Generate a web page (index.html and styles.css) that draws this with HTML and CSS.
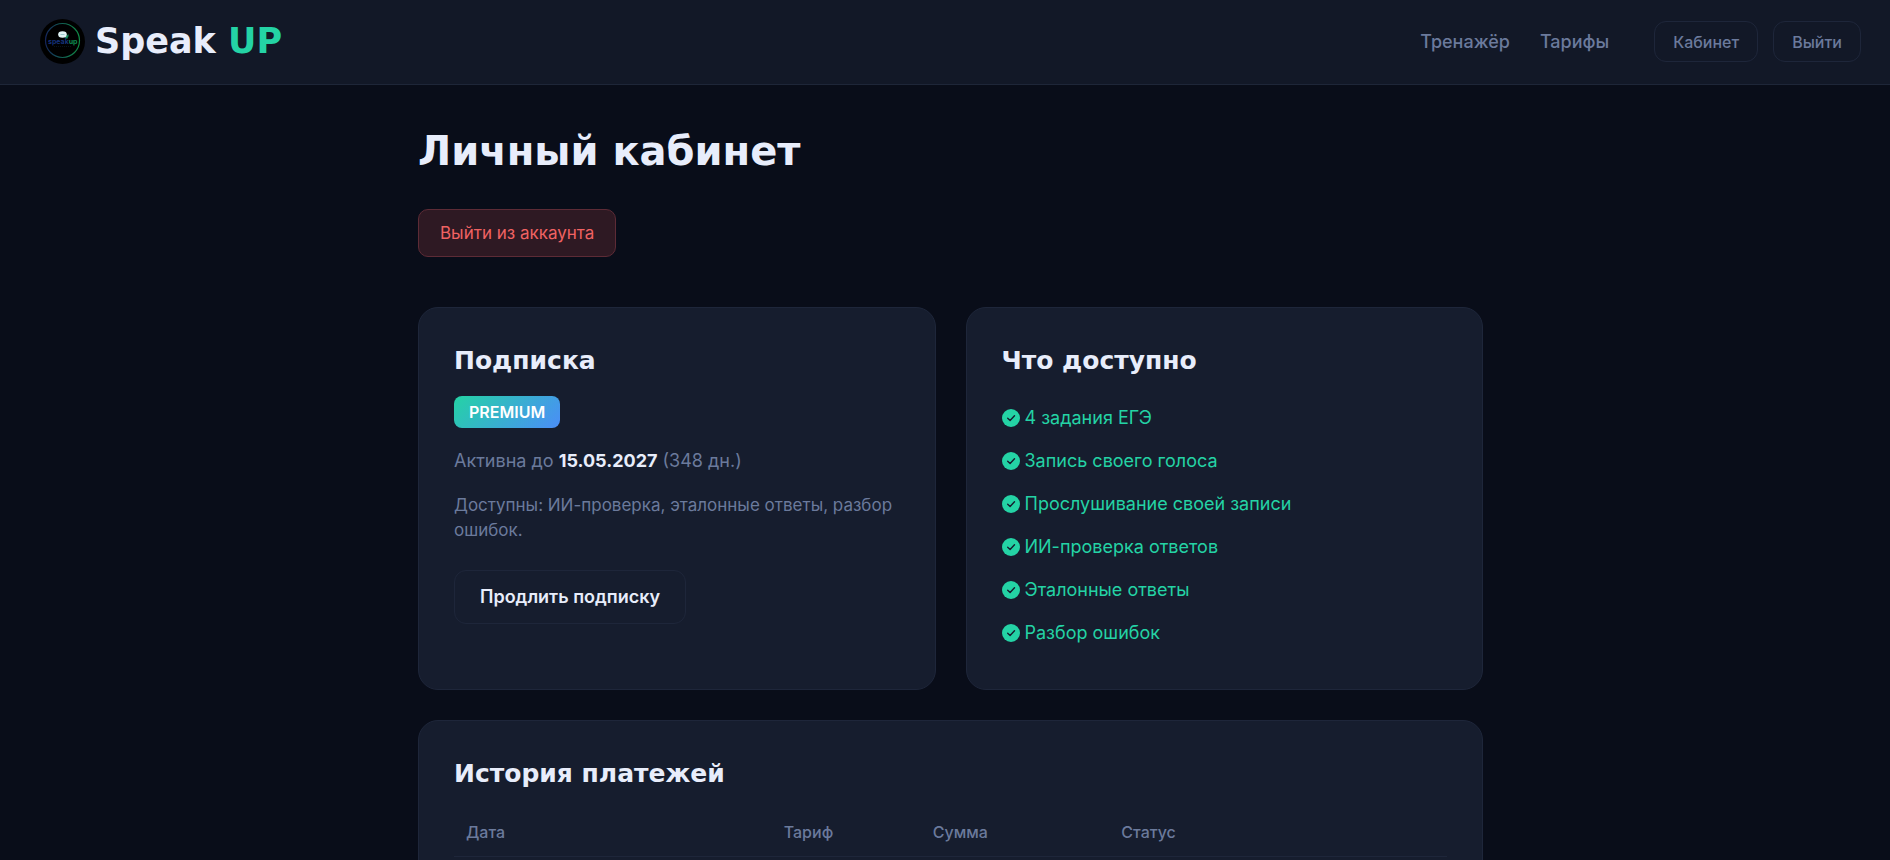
FILE: index.html
```
<!DOCTYPE html>
<html lang="ru">
<head>
    <meta charset="UTF-8">
    <meta name="viewport" content="width=device-width, initial-scale=1.0">
    <title>Speak UP — Личный кабинет</title>
    <link rel="stylesheet" href="styles.css">
</head>
<body>

    <!-- Check icon shared by the feature list -->
    <svg class="sprite" aria-hidden="true">
        <symbol id="check" viewBox="0 0 18 18">
            <circle cx="9" cy="9" r="9" fill="#24d3a5"/>
            <path d="M5.7 9.2l2.4 2.3 4.4-4.8" fill="none" stroke="#161d2e" stroke-width="1.4" stroke-linecap="round" stroke-linejoin="round"/>
        </symbol>
    </svg>

    <header class="header">
        <a class="brand" href="#">
            <svg class="brand-logo" viewBox="0 0 45 45" aria-hidden="true">
                <defs>
                    <linearGradient id="ring" x1="0" y1="0" x2="1" y2="0">
                        <stop offset="0" stop-color="#15265c"/>
                        <stop offset="0.5" stop-color="#126052"/>
                        <stop offset="1" stop-color="#108a45"/>
                    </linearGradient>
                </defs>
                <circle cx="22.5" cy="22.5" r="22.5" fill="#000"/>
                <circle cx="22.5" cy="21.5" r="17" fill="none" stroke="url(#ring)" stroke-width="1.2"/>
                <path d="M26 17c1.5-.5 2-1.5 2-2.5 1 2 .6 3.5-.4 4.2l-.4 1.3-2.4-1.600z" fill="#108a5a"/>
                <ellipse cx="22.5" cy="15.5" rx="4.3" ry="3.3" fill="#dff3f5"/>
                <path d="M20.5 15.5h4" stroke="#7fb8bd" stroke-width="0.7"/>
                <text x="8" y="25" class="logo-speak">speak<tspan class="logo-up">up</tspan></text>
                <path d="M14 27.5h17" stroke="#0c2230" stroke-width="0.6" stroke-dasharray="1 1"/>
            </svg>
            <span class="brand-name">Speak <span class="accent">UP</span></span>
        </a>
        <nav class="nav">
            <a class="nav-link" href="#">Тренажёр</a>
            <a class="nav-link" href="#">Тарифы</a>
            <div class="nav-buttons">
                <a class="btn btn-small" href="#">Кабинет</a>
                <button class="btn btn-small" type="button">Выйти</button>
            </div>
        </nav>
    </header>

    <main class="account">
        <h1>Личный кабинет</h1>
        <button class="btn-logout" type="button">Выйти из аккаунта</button>

        <div class="cards">
            <!-- Subscription -->
            <section class="card">
                <h2>Подписка</h2>
                <span class="badge">PREMIUM</span>
                <p class="status">Активна до <strong>15.05.2027</strong> (348 дн.)</p>
                <p class="note">Доступны: ИИ-проверка, эталонные ответы, разбор ошибок.</p>
                <a class="btn btn-large" href="#">Продлить подписку</a>
            </section>

            <!-- Features -->
            <section class="card">
                <h2>Что доступно</h2>
                <ul class="features">
                    <li><svg class="icon" aria-hidden="true"><use href="#check"/></svg>4 задания ЕГЭ</li>
                    <li><svg class="icon" aria-hidden="true"><use href="#check"/></svg>Запись своего голоса</li>
                    <li><svg class="icon" aria-hidden="true"><use href="#check"/></svg>Прослушивание своей записи</li>
                    <li><svg class="icon" aria-hidden="true"><use href="#check"/></svg>ИИ-проверка ответов</li>
                    <li><svg class="icon" aria-hidden="true"><use href="#check"/></svg>Эталонные ответы</li>
                    <li><svg class="icon" aria-hidden="true"><use href="#check"/></svg>Разбор ошибок</li>
                </ul>
            </section>

            <!-- Payments -->
            <section class="card card-wide">
                <h2>История платежей</h2>
                <table class="payments">
                    <thead>
                        <tr>
                            <th class="col-date" scope="col">Дата</th>
                            <th class="col-plan" scope="col">Тариф</th>
                            <th class="col-sum" scope="col">Сумма</th>
                            <th class="col-status" scope="col">Статус</th>
                        </tr>
                    </thead>
                    <tbody></tbody>
                </table>
            </section>
        </div>
    </main>

</body>
</html>
```
FILE: styles.css
```
:root {
    --bg: #090d19;
    --panel: #121827;
    --card: #161d2e;
    --border: #1e263a;
    --text: #e8edfb;
    --muted: #6b7a9c;
    --green: #24d3a5;
    --blue: #4b8df8;
    --red: #f06262;
}

* {
    margin: 0;
    padding: 0;
    box-sizing: border-box;
}

html {
    scrollbar-width: none;
}

body {
    background: var(--bg);
    color: var(--text);
    font-family: Inter, "Open Sans", sans-serif;
    font-size: 18px;
    line-height: 27px;
}

a {
    color: inherit;
    text-decoration: none;
}

.sprite {
    display: none;
}

/* Header */
.header {
    display: flex;
    justify-content: space-between;
    align-items: center;
    padding: 19px 29px 20px 40px;
    background: var(--panel);
    border-bottom: 1px solid #1e2638;
}

.brand {
    display: flex;
    align-items: center;
    gap: 10px;
}

.brand-logo {
    width: 45px;
    height: 45px;
}

.logo-speak {
    font: 700 7px Inter, sans-serif;
    fill: #15327a;
}

.logo-up {
    fill: #0f8a50;
}

.brand-name {
    font-family: "DejaVu Sans", sans-serif;
    font-size: 35px;
    font-weight: 700;
    line-height: 45px;
}

.accent {
    color: var(--green);
}

.nav {
    display: flex;
    align-items: center;
    gap: 30px;
    color: var(--muted);
}

.nav-link {
    font-weight: 500;
}

.nav-buttons {
    display: flex;
    gap: 15px;
    margin-left: 15px;
}

/* Buttons */
.btn {
    display: inline-block;
    border: 1px solid var(--border);
    border-radius: 12px;
    background: transparent;
    color: inherit;
    font-family: inherit;
    cursor: pointer;
}

.btn-small {
    padding: 9px 18px 8px;
    font-size: 16px;
    font-weight: 500;
    line-height: 22px;
}

.btn-large {
    padding: 13px 25px;
    font-size: 18px;
    font-weight: 600;
    line-height: 26px;
}

.btn-logout {
    margin: 35px 0 50px;
    padding: 11px 21px;
    border: 1px solid #5d2b36;
    border-radius: 10px;
    background: #2e1923;
    color: var(--red);
    font-family: inherit;
    font-size: 17px;
    line-height: 24px;
    cursor: pointer;
}

/* Account page */
.account {
    max-width: 1146px;
    margin: 0 auto;
    padding: 43px 35px 40px 46px;
}

h1,
h2 {
    font-family: "DejaVu Sans", sans-serif;
    font-weight: 700;
}

h1 {
    font-size: 40px;
    line-height: 46px;
}

h2 {
    margin-bottom: 18px;
    font-size: 25px;
    line-height: 35px;
}

.cards {
    display: grid;
    grid-template-columns: 1fr 1fr;
    gap: 30px;
}

.card {
    padding: 35px;
    background: var(--card);
    border: 1px solid var(--border);
    border-radius: 20px;
}

.card-wide {
    grid-column: 1 / -1;
}

.badge {
    display: block;
    width: fit-content;
    padding: 4px 15px;
    border-radius: 8px;
    background: linear-gradient(135deg, var(--green), var(--blue));
    color: #fff;
    font-size: 16px;
    font-weight: 600;
    line-height: 24px;
}

.status {
    margin-top: 19px;
    color: var(--muted);
}

.status strong {
    color: var(--text);
}

.note {
    margin: 19px 0 27px;
    color: var(--muted);
    font-size: 17px;
    line-height: 25px;
}

.features {
    list-style: none;
    color: var(--green);
}

.features li {
    display: flex;
    align-items: center;
    gap: 5px;
    padding: 8px 0;
}

.icon {
    width: 18px;
    height: 18px;
}

.payments {
    width: 100%;
    border-collapse: collapse;
    table-layout: fixed;
}

.payments th {
    padding: 11px 12px 12px;
    border-bottom: 1px solid var(--border);
    color: var(--muted);
    font-size: 16px;
    font-weight: 500;
    line-height: 24px;
    text-align: left;
}

.col-date {
    width: 32%;
}

.col-plan {
    width: 15%;
}

.col-sum {
    width: 19%;
}

.col-status {
    width: 34%;
}

/* Responsive Design */
@media screen and (max-width: 800px) {
    .header {
        flex-wrap: wrap;
        gap: 15px;
    }
    .cards {
        grid-template-columns: 1fr;
    }
}
```
